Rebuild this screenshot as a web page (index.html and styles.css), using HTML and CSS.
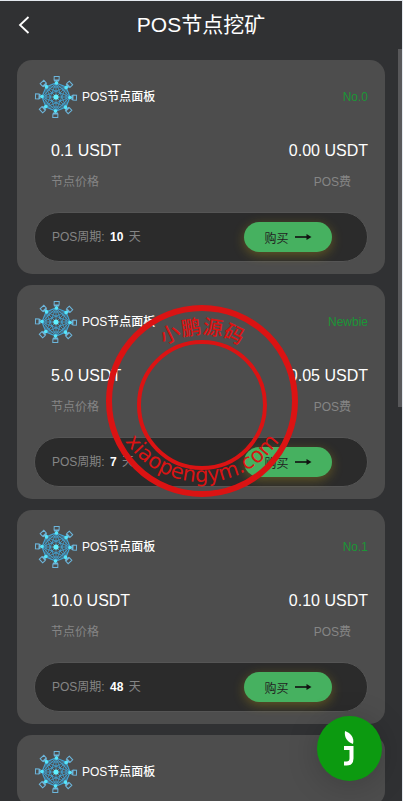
FILE: index.html
```html
<!DOCTYPE html>
<html lang="zh-CN">
<head>
  <meta charset="UTF-8">
  <meta name="viewport" content="width=device-width, initial-scale=1">
  <title>POS节点挖矿</title>
  <link rel="stylesheet" href="styles.css">
</head>
<body>

  <svg class="defs" aria-hidden="true">
    <symbol id="arrow" viewBox="0 0 17 8">
      <path d="M0 4h13" stroke="#111" stroke-width="1.6" fill="none"/>
      <path d="M11.500 1l5 3-5 3z" fill="#111"/>
    </symbol>
    <symbol id="pc" viewBox="0 0 8 10" overflow="visible">
      <path d="M-2.500-20.500h5v3.500h-5zM-2.500-16h5M0-17v3" fill="none" stroke="#6cb6dc" stroke-width="1"/>
      <circle cy="-14" r="1.800" fill="#55e6fa"/>
    </symbol>
    <symbol id="nodes" viewBox="-22 -22 44 44">
      <g fill="none" stroke="#43a5d6" stroke-width=".8">
        <path d="M0-14L10-10 14 0 10 10 0 14-10 10-14 0-10-10z" stroke-width="1.200"/>
        <path d="M0-14L14 0 0 14-14 0zM-10-10h20v20h-20z"/>
        <path d="M0-14L10 10-14 0 10-10 0 14-10-10 14 0-10 10z"/>
        <path d="M0-14v28M-14 0h28M-10-10l20 20M10-10l-20 20"/>
      </g>
      <g transform="rotate(2)">
        <use href="#pc" width="8" height="10"/>
        <use href="#pc" width="8" height="10" transform="rotate(45)"/>
        <use href="#pc" width="8" height="10" transform="rotate(90)"/>
        <use href="#pc" width="8" height="10" transform="rotate(135)"/>
        <use href="#pc" width="8" height="10" transform="rotate(180)"/>
        <use href="#pc" width="8" height="10" transform="rotate(225)"/>
        <use href="#pc" width="8" height="10" transform="rotate(270)"/>
        <use href="#pc" width="8" height="10" transform="rotate(315)"/>
      </g>
      <circle r="2.600" fill="#62f2ff"/>
    </symbol>
  </svg>

  <div class="app">
    <header>
      <button class="back" aria-label="返回">
        <svg width="12" height="20" viewBox="0 0 12 20"><path d="M10.500 2L2 10l8.500 8" fill="none" stroke="#fff" stroke-width="1.800"/></svg>
      </button>
      <h1>POS节点挖矿</h1>
    </header>

    <main class="list">
      <section class="card">
        <div class="card-head">
          <svg class="node-icon"><use href="#nodes"/></svg>
          <h2>POS节点面板</h2>
          <span class="level">No.0</span>
        </div>
        <div class="prices">
          <div><strong>0.1 USDT</strong><span>节点价格</span></div>
          <div class="fee"><strong>0.00 USDT</strong><span>POS费</span></div>
        </div>
        <div class="period">
          <p>POS周期: <b>10</b> 天</p>
          <button class="buy">购买 <svg class="arrow"><use href="#arrow"/></svg></button>
        </div>
      </section>

      <section class="card">
        <div class="card-head">
          <svg class="node-icon"><use href="#nodes"/></svg>
          <h2>POS节点面板</h2>
          <span class="level">Newbie</span>
        </div>
        <div class="prices">
          <div><strong>5.0 USDT</strong><span>节点价格</span></div>
          <div class="fee"><strong>0.05 USDT</strong><span>POS费</span></div>
        </div>
        <div class="period">
          <p>POS周期: <b>7</b> 天</p>
          <button class="buy">购买 <svg class="arrow"><use href="#arrow"/></svg></button>
        </div>
      </section>

      <section class="card">
        <div class="card-head">
          <svg class="node-icon"><use href="#nodes"/></svg>
          <h2>POS节点面板</h2>
          <span class="level">No.1</span>
        </div>
        <div class="prices">
          <div><strong>10.0 USDT</strong><span>节点价格</span></div>
          <div class="fee"><strong>0.10 USDT</strong><span>POS费</span></div>
        </div>
        <div class="period">
          <p>POS周期: <b>48</b> 天</p>
          <button class="buy">购买 <svg class="arrow"><use href="#arrow"/></svg></button>
        </div>
      </section>

      <section class="card">
        <div class="card-head">
          <svg class="node-icon"><use href="#nodes"/></svg>
          <h2>POS节点面板</h2>
        </div>
      </section>
    </main>

    <div class="scroll-thumb"></div>

    <svg class="seal" viewBox="0 0 192 192">
      <circle cx="96" cy="96" r="93" stroke-width="6"/>
      <circle cx="96" cy="100" r="63" stroke-width="4"/>
      <path id="sealTop" d="M29 96a67 67 0 0 1 134 0"/>
      <path id="sealBottom" d="M3 84a93 93 0 0 0 186 0"/>
      <text class="seal-cn"><textPath href="#sealTop" startOffset="50%">小鹏源码</textPath></text>
      <text class="seal-en"><textPath href="#sealBottom" startOffset="50%">xiaopengym.com</textPath></text>
    </svg>

    <button class="float" aria-label="客服">
      <svg width="14" height="36" viewBox="0 0 14 36">
        <path d="M2 0C8 2 11.500 7 10 13 4 11 1 6 2 0z" fill="#fff"/>
        <path d="M1 17H8.500v10.500q0 5-5 5H1" fill="none" stroke="#fff" stroke-width="4"/>
      </svg>
    </button>
  </div>

</body>
</html>
```

FILE: styles.css
```css
* {
  box-sizing: border-box;
}

body {
  margin: 0;
  height: 100vh;
  overflow: hidden;
  background-color: #e4e9ef;
  font-family: "Liberation Sans", "Noto Sans CJK SC", sans-serif;
  font-size: 12px;
  color: #fff;
}

h1, h2, p {
  margin: 0;
}

button {
  border: none;
  padding: 0;
  font-family: inherit;
  cursor: pointer;
}

.defs {
  position: absolute;
  width: 0;
  height: 0;
}

.app {
  position: relative;
  display: flex;
  flex-direction: column;
  height: calc(100vh - 1px);
  margin: 1px 1px 0 0;
  background-color: #303133;
  overflow: hidden;
}

header {
  display: grid;
  grid-template-columns: 48px 1fr 48px;
  align-items: center;
  flex: none;
  height: 48px;
}

.back {
  display: flex;
  justify-content: center;
  background: none;
}

h1 {
  text-align: center;
  font-size: 21px;
  line-height: 30px;
  font-weight: 400;
}

.list {
  flex: 1;
  overflow: hidden;
  display: flex;
  flex-direction: column;
  gap: 11px;
  padding: 11px 17px 0;
}

.card {
  flex: none;
  padding: 15px 17px 12px;
  background-color: #4d4d4d;
  border-radius: 15px;
}

.card-head {
  display: flex;
  align-items: center;
  gap: 4px;
}

.node-icon {
  width: 44px;
  height: 44px;
}

h2 {
  font-size: 12px;
  line-height: 18px;
  font-weight: 500;
}

.level {
  margin-left: auto;
  color: #1b9636;
}

.prices {
  display: flex;
  justify-content: space-between;
  margin: 20px 0 21px;
  padding-left: 17px;
}

.prices strong,
.prices span {
  display: block;
}

.prices strong {
  font-size: 16px;
  line-height: 24px;
  font-weight: 400;
}

.prices span {
  margin-top: 10px;
  line-height: 18px;
  color: #858585;
}

.fee {
  text-align: right;
}

.fee span {
  padding-right: 17px;
}

.period {
  display: flex;
  align-items: center;
  justify-content: space-between;
  height: 50px;
  padding: 0 35px 0 17px;
  background-color: #2b2b2b;
  border: 1px solid #555;
  border-radius: 25px;
}

.period p {
  line-height: 18px;
  color: #858585;
}

.period b {
  margin: 0 2px;
  color: #fff;
}

.buy {
  display: flex;
  align-items: center;
  justify-content: center;
  gap: 6px;
  width: 88px;
  height: 30px;
  font-size: 12px;
  color: #222;
  background-color: #46b160;
  border-radius: 15px;
  box-shadow: 0 3px 12px rgba(225, 190, 20, 0.3);
}

.arrow {
  width: 17px;
  height: 8px;
}

/* overlays */
.scroll-thumb {
  position: absolute;
  top: 48px;
  right: 0;
  width: 4px;
  height: 358px;
  background-color: #58585a;
}

.seal {
  position: absolute;
  top: 50%;
  left: 50%;
  width: 192px;
  height: 192px;
  transform: translate(-50%, -50%);
  margin-left: 1px;
  fill: none;
  stroke: #db1313;
  pointer-events: none;
}

#sealTop,
#sealBottom {
  stroke: none;
}

.seal text {
  fill: #db1313;
  stroke: none;
  text-anchor: middle;
}

.seal-cn {
  font-family: "Noto Sans CJK SC", sans-serif;
  font-size: 20px;
  font-weight: 500;
}

.seal-en {
  font-family: "DejaVu Sans", sans-serif;
  font-size: 21px;
}

.float {
  position: absolute;
  right: 20px;
  bottom: 20px;
  display: flex;
  align-items: center;
  justify-content: center;
  width: 65px;
  height: 65px;
  background-color: #0c9a10;
  border-radius: 50%;
  box-shadow: 0 4px 32px rgba(0, 0, 0, 0.2);
}
```
